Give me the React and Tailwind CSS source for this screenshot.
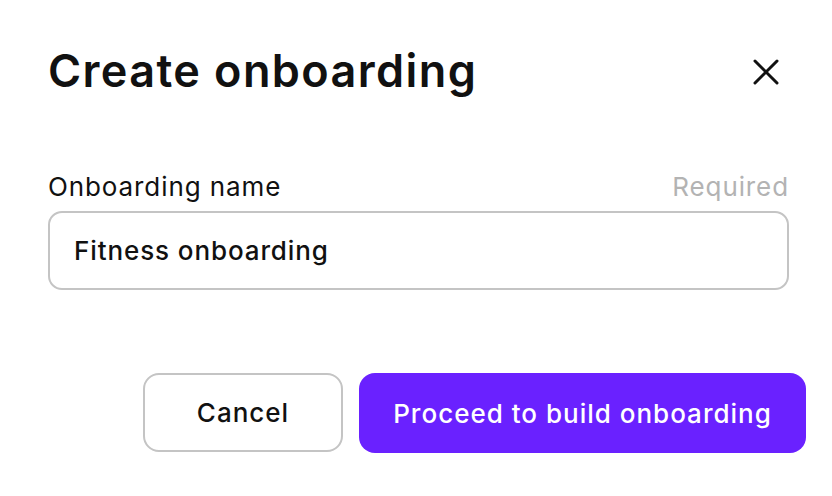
import React, { useState } from 'react';

const font = { fontFamily: 'Inter, "Noto Sans", sans-serif' };

const CloseIcon = () => (
  <svg width="26" height="26" viewBox="0 0 26 26" fill="none" stroke="#111111" strokeWidth="3" strokeLinecap="round">
    <path d="M2 2L24 24" />
    <path d="M24 2L2 24" />
  </svg>
);

const App = () => {
  const [name, setName] = useState('Fitness onboarding');

  return (
    <div style={font} className="w-[832px] h-[496px] bg-white text-[#111111] overflow-hidden">
      <div className="pl-[48px] pr-[43px]">
        {/* -- header */}
        <div className="flex items-center justify-between pt-[44px]">
          <h1 className="text-[45px] leading-[54px] font-semibold tracking-[1.4px]">Create onboarding</h1>
          <button className="mr-[10px] mt-[2px]">
            <CloseIcon />
          </button>
        </div>

        {/* -- name field */}
        <div className="mt-[74px] flex items-center justify-between">
          <label className="text-[26px] leading-[30px] tracking-[0.9px]">Onboarding name</label>
          <span className="text-[26px] leading-[30px] tracking-[0.9px] text-[#b3b3b3]">Required</span>
        </div>
        <input
          type="text"
          value={name}
          onChange={(e) => setName(e.target.value)}
          className="mt-[9px] w-full h-[79px] px-[24px] text-[26px] tracking-[0.9px] font-medium border-2 border-[#c4c4c4] rounded-[14px] outline-none"
        />
      </div>

      {/* -- footer */}
      <div className="flex justify-end gap-[16px] pr-[26px] mt-[83px]">
        <button className="w-[200px] h-[79px] border-2 border-[#c4c4c4] rounded-[16px] text-[26px] tracking-[1px] font-medium bg-white">
          Cancel
        </button>
        <button className="w-[447px] h-[80px] rounded-[16px] bg-[#6a21ff] text-white text-[26px] tracking-[1px] font-medium">
          Proceed to build onboarding
        </button>
      </div>
    </div>
  );
};

export default App;
